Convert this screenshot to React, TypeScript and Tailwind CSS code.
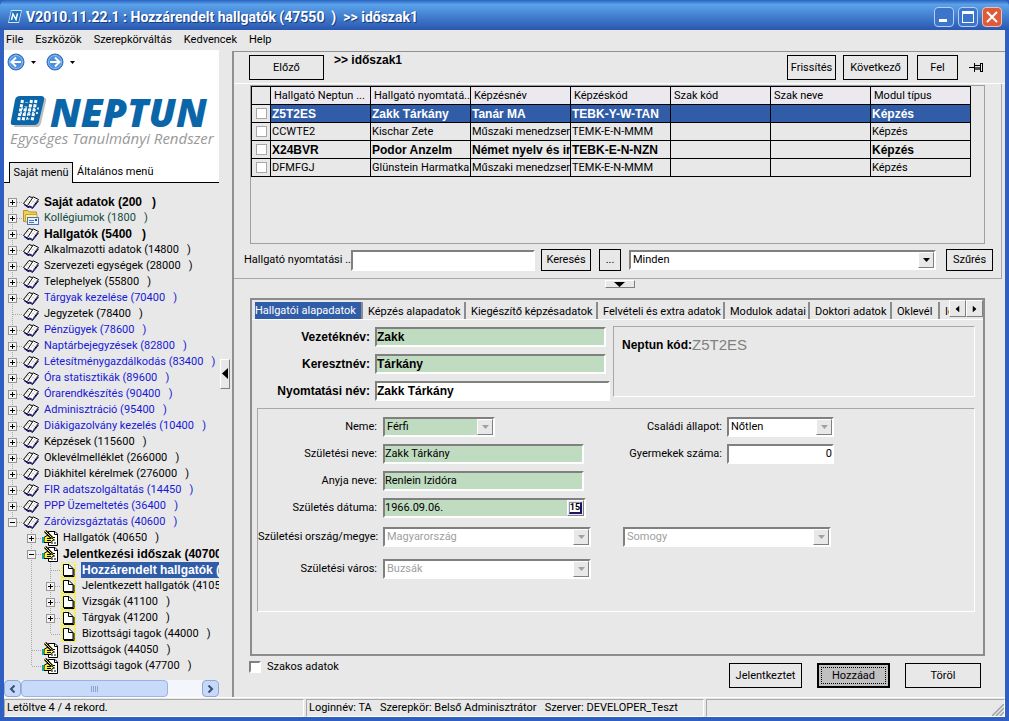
import { useState, ReactNode } from 'react';
import { clsx } from 'clsx';

type TreeIcon = 'book' | 'folder' | 'hand' | 'page';

interface TreeItem {
  label: string;
  level: number;
  icon: TreeIcon;
  box?: '+' | '-';
  bold?: boolean;
  color?: 'blue' | 'green';
  // one entry per level: v = line runs through, t = branch, l = last branch, f = first branch
  lines: string;
}

const TREE: TreeItem[] = [
  { label: 'Saját adatok (200   )', level: 0, icon: 'book', box: '+', bold: true, lines: 'f' },
  { label: 'Kollégiumok (1800   )', level: 0, icon: 'folder', box: '+', color: 'green', lines: 't' },
  { label: 'Hallgatók (5400   )', level: 0, icon: 'book', box: '+', bold: true, lines: 't' },
  { label: 'Alkalmazotti adatok (14800   )', level: 0, icon: 'book', box: '+', lines: 't' },
  { label: 'Szervezeti egységek (28000   )', level: 0, icon: 'book', box: '+', lines: 't' },
  { label: 'Telephelyek (55800   )', level: 0, icon: 'book', box: '+', lines: 't' },
  { label: 'Tárgyak kezelése (70400   )', level: 0, icon: 'book', box: '+', color: 'blue', lines: 't' },
  { label: 'Jegyzetek (78400   )', level: 0, icon: 'book', lines: 't' },
  { label: 'Pénzügyek (78600   )', level: 0, icon: 'book', box: '+', color: 'blue', lines: 't' },
  { label: 'Naptárbejegyzések (82800   )', level: 0, icon: 'book', box: '+', color: 'blue', lines: 't' },
  { label: 'Létesítménygazdálkodás (83400   )', level: 0, icon: 'book', box: '+', color: 'blue', lines: 't' },
  { label: 'Óra statisztikák (89600   )', level: 0, icon: 'book', box: '+', color: 'blue', lines: 't' },
  { label: 'Órarendkészítés (90400   )', level: 0, icon: 'book', box: '+', color: 'blue', lines: 't' },
  { label: 'Adminisztráció (95400   )', level: 0, icon: 'book', box: '+', color: 'blue', lines: 't' },
  { label: 'Diákigazolvány kezelés (10400   )', level: 0, icon: 'book', box: '+', color: 'blue', lines: 't' },
  { label: 'Képzések (115600   )', level: 0, icon: 'book', box: '+', lines: 't' },
  { label: 'Oklevélmelléklet (266000   )', level: 0, icon: 'book', box: '+', lines: 't' },
  { label: 'Diákhitel kérelmek (276000   )', level: 0, icon: 'book', box: '+', lines: 't' },
  { label: 'FIR adatszolgáltatás (14450   )', level: 0, icon: 'book', box: '+', color: 'blue', lines: 't' },
  { label: 'PPP Üzemeltetés (36400   )', level: 0, icon: 'book', box: '+', color: 'blue', lines: 't' },
  { label: 'Záróvizsgáztatás (40600   )', level: 0, icon: 'book', box: '-', color: 'blue', lines: 'l' },
  { label: 'Hallgatók (40650   )', level: 1, icon: 'hand', box: '+', lines: ' t' },
  { label: 'Jelentkezési időszak (40700   )', level: 1, icon: 'hand', box: '-', bold: true, lines: ' t' },
  { label: 'Hozzárendelt hallgatók (47550   )', level: 2, icon: 'page', bold: true, lines: ' vt' },
  { label: 'Jelentkezett hallgatók (41050   )', level: 2, icon: 'page', box: '+', lines: ' vt' },
  { label: 'Vizsgák (41100   )', level: 2, icon: 'page', box: '+', lines: ' vt' },
  { label: 'Tárgyak (41200   )', level: 2, icon: 'page', box: '+', lines: ' vt' },
  { label: 'Bizottsági tagok (44000   )', level: 2, icon: 'page', lines: ' vl' },
  { label: 'Bizottságok (44050   )', level: 1, icon: 'hand', lines: ' t' },
  { label: 'Bizottsági tagok (47700   )', level: 1, icon: 'hand', lines: ' l' },
];

const COLUMNS = ['Hallgató Neptun ...', 'Hallgató nyomtatá...', 'Képzésnév', 'Képzéskód', 'Szak kód', 'Szak neve', 'Modul típus'];

const ROWS = [
  { bold: true, cells: ['Z5T2ES', 'Zakk Tárkány', 'Tanár MA', 'TEBK-Y-W-TAN', '', '', 'Képzés'] },
  { bold: false, cells: ['CCWTE2', 'Kischar Zete', 'Műszaki menedzser', 'TEMK-E-N-MMM', '', '', 'Képzés'] },
  { bold: true, cells: ['X24BVR', 'Podor Anzelm', 'Német nyelv és ir', 'TEBK-E-N-NZN', '', '', 'Képzés'] },
  { bold: false, cells: ['DFMFGJ', 'Glünstein Harmatka', 'Műszaki menedzser', 'TEMK-E-N-MMM', '', '', 'Képzés'] },
];

const TABS = [
  { label: 'Hallgatói alapadatok', width: 'w-[108px]' },
  { label: 'Képzés alapadatok', width: 'w-[103px]' },
  { label: 'Kiegészítő képzésadatok', width: 'w-[132px]' },
  { label: 'Felvételi és extra adatok', width: 'w-[127px]' },
  { label: 'Modulok adatai', width: 'w-[85px]' },
  { label: 'Doktori adatok', width: 'w-[82px]' },
  { label: 'Oklevél', width: 'w-[48px]' },
  { label: 'Id', width: 'w-[60px]' },
];

const INSET = 'border-2 border-t-[#808080] border-l-[#808080] border-r-white border-b-white';
const RAISED = 'border border-t-white border-l-white border-r-[#808080] border-b-[#808080] bg-[#e8e8e8]';
const GROUP = 'border border-t-[#a8a8a8] border-r-white border-b-white border-l-[#a8a8a8]';
const BOLD = "font-['Liberation_Sans',sans-serif] text-[12px] font-bold";

function BookIcon() {
  return (
    <svg width="16" height="16" viewBox="0 0 16 16" className="shrink-0">
      <path d="M0.500 9.500 L6 2.500 L9 3.500 L10.500 3 L15.500 5.500 L9.500 13.500 L7 12 L5 12.500 Z" fill="#fff" stroke="#000" />
      <path d="M1 10.500 L5 13.500 L7 13 L9.500 14.500 L15.500 7" fill="none" stroke="#000080" />
      <path d="M9.500 4 L4.500 11.500" stroke="#000" fill="none" />
      <path d="M6 5 L3.500 8.500 M8 5.500 L5 9.500 M11.500 5.500 L8 10 M13.500 6.500 L10 11" stroke="#999" strokeDasharray="1 1" />
    </svg>
  );
}

function FolderIcon() {
  return (
    <svg width="16" height="16" viewBox="0 0 16 16" className="shrink-0">
      <path d="M0.500 0.500 H5 L6.500 2 H13.500 V11.500 H0.500 Z" fill="#f5cf55" stroke="#b8902c" />
      <path d="M2.500 4.500 H14 V12 H2.500 Z" fill="#fdeea0" stroke="#c9a13a" />
      <rect x="4.500" y="7.500" width="11" height="7" fill="#e6f0fc" stroke="#4a74b4" />
      <path d="M6 10.500 H11 M6 12.500 H11" stroke="#4a74b4" />
      <rect x="12" y="9" width="2" height="2" fill="#2d5ca8" />
    </svg>
  );
}

function HandIcon() {
  return (
    <svg width="16" height="16" viewBox="0 0 16 16" className="shrink-0">
      <path d="M6.500 1.500 H13 L15.500 4 V15.500 H6.500 Z" fill="#fff" stroke="#000" />
      <path d="M12.500 1.500 V4.500 H15.500" fill="none" stroke="#000" />
      <path d="M11 7.500 H14 M11 10 H14 M9 13 H14" stroke="#000" strokeDasharray="2 1" />
      <path d="M2 7.500 L5 5.500 L9 6.500 L11.500 9.500 L9 12.500 L2 12.500 Z" fill="#f7f03a" stroke="#000" />
      <path d="M5 8.500 H9 M5 10.500 H9" stroke="#000" />
      <rect x="0" y="7" width="2" height="6" fill="#12a5a5" />
      <path d="M3 1 L10 8" stroke="#000" strokeWidth="3" />
      <path d="M3 1 L9.500 7.500" stroke="#f7e83a" strokeWidth="1" />
    </svg>
  );
}

function PageIcon() {
  return (
    <svg width="16" height="16" viewBox="0 0 16 16" className="shrink-0">
      <rect x="1" y="0" width="13" height="16" fill="none" stroke="#f4f03c" strokeWidth="2" strokeDasharray="2 1" />
      <path d="M2.500 2.500 H8 L12 6.500 V13.500 H2.500 Z" fill="#fff" stroke="#000" />
      <path d="M7.500 2.500 V6.500 H12" fill="none" stroke="#000" />
      <path d="M13 7 V14.500 H3" fill="none" stroke="#000" />
    </svg>
  );
}

const ICONS: Record<TreeIcon, ReactNode> = {
  book: <BookIcon />,
  folder: <FolderIcon />,
  hand: <HandIcon />,
  page: <PageIcon />,
};

// A 19px wide cell of the tree's dotted guide lines, with the expander drawn on top
function Guide({ kind, box }: { kind: string; box?: '+' | '-' }) {
  return (
    <svg width="19" height="16" viewBox="0 0 19 16" className="shrink-0">
      <g stroke="#a8a8a8" strokeDasharray="1 1" fill="none">
        {(kind === 'v' || kind === 't') && <path d="M8.500 0 V16" />}
        {kind === 'l' && <path d="M8.500 0 V8" />}
        {kind === 'f' && <path d="M8.500 8 V16" />}
        {'tlf'.includes(kind) && <path d="M9 8.500 H19" />}
      </g>
      {box && (
        <>
          <rect x="4.500" y="4.500" width="8" height="8" fill="#f4f4f4" stroke="#969696" />
          <path d={box === '+' ? 'M6 8.500 H11 M8.500 6 V11' : 'M6 8.500 H11'} stroke="#000" />
        </>
      )}
    </svg>
  );
}

function NavArrow({ back }: { back?: boolean }) {
  return (
    <svg width="18" height="18" viewBox="0 0 18 18" className={clsx(!back && 'rotate-180')}>
      <circle cx="9" cy="9" r="8" fill="#4d90dc" stroke="#2f6dbd" />
      <circle cx="9" cy="9" r="6.500" fill="none" stroke="#8dbcf0" />
      <path d="M14 9 H5 M9 4.500 L4.500 9 L9 13.500" fill="none" stroke="#fff" strokeWidth="2" />
    </svg>
  );
}

function Caret({ className }: { className?: string }) {
  return (
    <svg width="7" height="4" viewBox="0 0 7 4" className={className}>
      <path d="M0 0 H7 L3.500 4 Z" fill="currentColor" />
    </svg>
  );
}

function SmallCaret() {
  return (
    <svg width="5" height="3" viewBox="0 0 5 3" className="mx-1.5">
      <path d="M0 0 H5 L2.500 3 Z" fill="currentColor" />
    </svg>
  );
}

function AppIcon() {
  return (
    <svg width="14" height="14" viewBox="0 0 14 14">
      <path d="M3 0 H14 L11 13 H0 Z" fill="#cfe6fb" />
      <path d="M3.500 1 H13 L10.500 12 H1 Z" fill="#1d73bd" />
      <path d="M3.500 10 L5 4 L8 9.500 L9.500 3.500" fill="none" stroke="#fff" strokeWidth="1.500" />
    </svg>
  );
}

function LogoMark() {
  return (
    <svg width="38" height="34" viewBox="0 0 38 34" className="shrink-0">
      <path d="M12 3 H34 Q37 3 36 6 L31 28 Q30 32 27 32 H4 Z" fill="#bdbdbd" />
      <path d="M10 1 H31 Q35 1 34 5 L29 26 Q28 30 24 30 H3 Q0 30 1 26 L5 5 Q6 1 10 1 Z" fill="#0a66a8" />
      <path d="M12.500 5 L8.500 26 M17 5 L13 26 M21.500 5 L17.500 26 M26 5 L22 26" stroke="#fff" strokeWidth="3" strokeDasharray="3 1.400" />
      <path d="M11 13.600 H29 M10 18 H28" stroke="#cfe3f3" strokeWidth="2" strokeDasharray="2 2" />
      <path d="M15 6 H19 M14 10 H18 M18 22 H21 M17 26 H20" stroke="#0a66a8" strokeWidth="3" />
    </svg>
  );
}

function PushButton({ children, className }: { children: ReactNode; className?: string }) {
  return (
    <button className={clsx('flex shrink-0 items-center justify-center border border-black bg-[#e8e8e8]', className)}>
      {children}
    </button>
  );
}

interface DropDownProps {
  id: string;
  label?: string;
  value: string;
  className?: string;
  tone?: 'green' | 'grey' | 'plain';
  active?: boolean;
}

function DropDown({ id, label, value, className, tone = 'plain', active }: DropDownProps) {
  return (
    <div className={clsx('relative h-5', className)}>
      <select
        id={id}
        aria-label={label}
        defaultValue={value}
        className={clsx(
          'h-full w-full appearance-none rounded-none pl-0.5 leading-4 outline-none',
          INSET,
          tone === 'green' ? 'bg-[#c0dcc0]' : 'bg-white',
          tone === 'grey' && 'text-[#a0a0a0]'
        )}
      >
        <option>{value}</option>
      </select>
      <span className={clsx('pointer-events-none absolute top-0.5 right-0.5 bottom-0.5 flex w-4 items-center justify-center', RAISED)}>
        <Caret className={active ? 'text-black' : 'text-[#a0a0a0]'} />
      </span>
    </div>
  );
}

function TextField({ id, value, className }: { id: string; value: string; className?: string }) {
  return <input id={id} type="text" defaultValue={value} className={clsx('h-5 rounded-none outline-none', INSET, className)} />;
}

function TitleBar() {
  return (
    <header className="flex h-[30px] items-center justify-between rounded-t-md bg-linear-to-b from-[#2a62c0] via-[#5aa2ea] via-15% to-[#2b57b0] pr-[7px] pl-2 text-white">
      <div className="flex items-center gap-1 pt-1">
        <AppIcon />
        <h1 className="text-[14px] leading-4 font-bold whitespace-pre [text-shadow:1px_1px_0_#153a80]">
          {'V2010.11.22.1 : Hozzárendelt hallgatók (47550  )  >> időszak1'}
        </h1>
      </div>
      <div className="flex gap-1 pt-1">
        <button aria-label="Kis méret" className="flex size-5 items-end rounded-sm border border-[#b4cdf0] bg-[#3c76cc] p-1">
          <span className="h-[3px] w-2 bg-white" />
        </button>
        <button aria-label="Teljes méret" className="flex size-5 items-center justify-center rounded-sm border border-[#b4cdf0] bg-[#3c76cc]">
          <span className="h-3 w-3 border border-t-[3px] border-white" />
        </button>
        <button aria-label="Bezárás" className="flex size-5 items-center justify-center rounded-sm border border-[#f0c0b0] bg-[#dd5a3a]">
          <svg width="12" height="12" viewBox="0 0 12 12">
            <path d="M1 1 L11 11 M11 1 L1 11" stroke="#fff" strokeWidth="2" />
          </svg>
        </button>
      </div>
    </header>
  );
}

function Sidebar() {
  const [selected, setSelected] = useState(23);

  return (
    <aside className="flex w-[215px] shrink-0 flex-col">
      <div className="bg-white">
        <div className="flex h-6 items-center pl-[3px]">
          <button aria-label="Vissza"><NavArrow back /></button>
          <SmallCaret />
          <button aria-label="Előre" className="ml-1"><NavArrow /></button>
          <SmallCaret />
        </div>
        <div className="px-1.5 pt-5 pb-4">
          <div className="flex h-9 items-center gap-0.5">
            <LogoMark />
            <span className="font-['Open_Sans',sans-serif] text-[39px] leading-9 font-extrabold text-[#0a66a8] italic">NEPTUN</span>
          </div>
          <p className="font-['Open_Sans',sans-serif] text-[15px] leading-4 whitespace-nowrap text-[#999] italic">
            Egységes Tanulmányi Rendszer
          </p>
        </div>
        <div className="flex h-[21px] items-stretch">
          <span className="w-[5px] border-b border-black" />
          <button className="w-16 border border-b-0 border-black bg-[#e8e8e8] whitespace-nowrap">Saját menü</button>
          <button className="flex-1 border-b border-black pl-1 text-left">Általános menü</button>
        </div>
      </div>

      <ul className="flex-1 overflow-hidden pt-[11px] pb-1.5">
        {TREE.map((item, i) => (
          <li key={item.label} className="flex h-4 items-center">
            {item.lines.split('').map((kind, n) => (
              <Guide key={n} kind={kind} box={n === item.level ? item.box : undefined} />
            ))}
            {ICONS[item.icon]}
            <button
              onClick={() => setSelected(i)}
              className={clsx(
                'ml-1 h-4 pl-px text-left leading-4 whitespace-pre',
                item.bold && BOLD,
                selected === i ? 'bg-[#315da8] text-white' : item.color === 'blue' ? 'text-[#1818d8]' : item.color === 'green' && 'text-[#104a40]'
              )}
            >
              {item.label}
            </button>
          </li>
        ))}
      </ul>

      <div className="flex h-[17px] bg-[#f4f6fc]">
        <button aria-label="Balra" className="flex w-[17px] items-center justify-center rounded-sm border border-[#8ea8d8] bg-[#c8d8f8]">
          <svg width="7" height="8" viewBox="0 0 7 8"><path d="M5.500 0.500 L2 4 L5.500 7.500" fill="none" stroke="#34507c" strokeWidth="2" /></svg>
        </button>
        <div className="flex w-[147px] items-center justify-center gap-px rounded-sm border border-[#98b4e4] bg-[#c8dafa]">
          {[0, 1, 2, 3].map(n => (
            <span key={n} className="h-1.5 w-px border-r border-[#8aa4d4]" />
          ))}
        </div>
        <button aria-label="Jobbra" className="ml-auto flex w-[17px] items-center justify-center rounded-sm border border-[#8ea8d8] bg-[#c8d8f8]">
          <svg width="7" height="8" viewBox="0 0 7 8"><path d="M1.500 0.500 L5 4 L1.500 7.500" fill="none" stroke="#34507c" strokeWidth="2" /></svg>
        </button>
      </div>
    </aside>
  );
}

function Toolbar() {
  return (
    <div className="flex h-8 shrink-0 items-center border-b border-white pr-[21px] pl-[15px]">
      <PushButton className="h-[25px] w-[75px]">Előző</PushButton>
      <h2 className={clsx('self-start pl-2.5 leading-4', BOLD)}>&gt;&gt; időszak1</h2>
      <div className="ml-auto flex items-center">
        <PushButton className="h-[25px] w-[49px]">Frissítés</PushButton>
        <PushButton className="ml-[7px] h-[25px] w-[65px]">Következő</PushButton>
        <PushButton className="ml-[9px] h-[25px] w-[41px]">Fel</PushButton>
        <button aria-label="Rögzítés" className="ml-[11px]">
          <svg width="15" height="11" viewBox="0 0 15 11">
            <path d="M0 5.500 H5 M5.500 1 V10 M6 3.500 H11 M6 7.500 H11 M11.500 1 V10 M13.500 1 V10" stroke="#000" strokeWidth="1" />
            <rect x="6" y="5" width="5" height="3" fill="#555" />
            <path d="M11 1.500 H14 M11 9.500 H14" stroke="#000" />
          </svg>
        </button>
      </div>
    </div>
  );
}

function StudentGrid() {
  const [selected, setSelected] = useState(0);

  return (
    <div className="mt-px mr-4 ml-4 h-[159px] border border-[#a0a0a0]">
      <table className="w-[720px] table-fixed border-collapse">
        <thead>
          <tr className="h-[18px]">
            <th className="w-[19px] border border-black" />
            {COLUMNS.map(col => (
              <th key={col} className="overflow-hidden border border-black bg-[#ebe9ee] p-0 pl-[3px] text-left leading-4 font-normal whitespace-nowrap">
                {col}
              </th>
            ))}
          </tr>
        </thead>
        <tbody>
          {ROWS.map((row, i) => (
            <tr
              key={i}
              onClick={() => setSelected(i)}
              className={clsx('h-[18px]', row.bold && BOLD, selected === i && 'bg-[#315da8] text-white')}
            >
              <td className="border border-black bg-[#e8e8e8] p-0">
                <input
                  type="checkbox"
                  aria-label={`${row.cells[1]} kijelölése`}
                  className="mx-auto block size-[11px] appearance-none border border-[#a8a8a8] bg-white"
                />
              </td>
              {row.cells.map((cell, n) => (
                <td key={n} className="overflow-hidden border border-black p-0 pl-px leading-4 whitespace-nowrap">{cell}</td>
              ))}
            </tr>
          ))}
        </tbody>
      </table>
    </div>
  );
}

function FilterBar() {
  return (
    <div className="flex items-center pt-[5px] pr-2 pb-[7px] pl-2.5">
      <label htmlFor="search" className="w-[107px] shrink-0 whitespace-nowrap">Hallgató nyomtatási ...</label>
      <input id="search" type="text" className={clsx('h-[21px] w-[184px] bg-white outline-none', INSET)} />
      <PushButton className="ml-1.5 h-[22px] w-[50px]">Keresés</PushButton>
      <PushButton className="mr-2 ml-2 h-[22px] w-[22px]">...</PushButton>
      <DropDown id="filter" label="Szűrő" value="Minden" className="flex-1" active />
      <PushButton className="ml-2.5 h-[22px] w-[47px]">Szűrés</PushButton>
    </div>
  );
}

function NameRow({ id, label, value, green }: { id: string; label: string; value: string; green?: boolean }) {
  return (
    <div className={clsx('flex h-[27px] items-center gap-[5px]', BOLD)}>
      <label htmlFor={id} className="w-[113px] text-right">{label}</label>
      <TextField id={id} value={value} className={green ? 'w-[231px] bg-[#c0dcc0]' : 'w-[235px] bg-white'} />
    </div>
  );
}

function DetailForm() {
  return (
    <div className="pr-2 pb-[42px] pl-[5px]">
      <div className="flex pt-[3px]">
        <div className="w-[356px] shrink-0">
          <NameRow id="lastname" label="Vezetéknév:" value="Zakk" green />
          <NameRow id="firstname" label="Keresztnév:" value="Tárkány" green />
          <NameRow id="printname" label="Nyomtatási név:" value="Zakk Tárkány" />
        </div>
        <div className={clsx('mt-[3px] h-[71px] flex-1 px-2 pt-2', GROUP)}>
          <div className="flex items-center">
            <label htmlFor="code" className={BOLD}>Neptun kód:</label>
            <input id="code" readOnly defaultValue="Z5T2ES" className="w-24 bg-transparent font-['Liberation_Sans',sans-serif] text-[15px] leading-5 text-[#808080] outline-none" />
          </div>
        </div>
      </div>

      <div className={clsx('mt-1 grid grid-cols-[119px_240px_1fr] items-center pt-1 pb-[26px] whitespace-nowrap', GROUP)}>
        <label htmlFor="gender" className="text-right">Neme:</label>
        <div className="flex h-[27px] items-center pl-1.5">
          <DropDown id="gender" value="Férfi" className="w-[112px]" tone="green" />
        </div>
        <div className="flex items-center gap-[5px]">
          <label htmlFor="marital" className="w-[105px] text-right">Családi állapot:</label>
          <DropDown id="marital" value="Nőtlen" className="w-[107px]" />
        </div>

        <label htmlFor="birthname" className="text-right">Születési neve:</label>
        <div className="flex h-[27px] items-center pl-1.5">
          <TextField id="birthname" value="Zakk Tárkány" className="w-[201px] bg-[#c0dcc0]" />
        </div>
        <div className="flex items-center gap-[5px]">
          <label htmlFor="children" className="w-[105px] text-right">Gyermekek száma:</label>
          <TextField id="children" value="0" className="w-[107px] bg-white text-right" />
        </div>

        <label htmlFor="mother" className="text-right">Anyja neve:</label>
        <div className="col-span-2 flex h-[27px] items-center pl-1.5">
          <TextField id="mother" value="Renlein Izidóra" className="w-[201px] bg-[#c0dcc0]" />
        </div>

        <label htmlFor="birthdate" className="text-right">Születés dátuma:</label>
        <div className="col-span-2 flex h-[27px] items-center pl-1.5">
          <div className={clsx('flex h-5 w-[203px] bg-[#c0dcc0]', INSET)}>
            <input id="birthdate" type="text" defaultValue="1966.09.06." className="min-w-0 flex-1 outline-none" />
            <button aria-label="Naptár" className={clsx('flex w-[17px] items-center justify-center', RAISED)}>
              <span className="border border-t-[#9090b0] border-r-2 border-b-2 border-l-[#9090b0] border-[#181860] bg-white text-[9px] leading-[9px] font-bold">15</span>
            </button>
          </div>
        </div>

        <label htmlFor="country" className="text-right">Születési ország/megye:</label>
        <div className="flex h-8 items-center pl-1.5">
          <DropDown id="country" value="Magyarország" className="w-[208px]" tone="grey" />
        </div>
        <div className="pl-1.5">
          <DropDown id="county" label="Megye" value="Somogy" className="w-[208px]" tone="grey" />
        </div>

        <label htmlFor="city" className="text-right">Születési város:</label>
        <div className="col-span-2 flex h-8 items-center pl-1.5">
          <DropDown id="city" value="Buzsák" className="w-[208px]" tone="grey" />
        </div>
      </div>
    </div>
  );
}

function DetailTabs() {
  const [active, setActive] = useState(0);

  return (
    <section className="mr-5 ml-4 border-2 border-[#8c8c8c]">
      <div className="flex h-5 items-start border-b border-white pl-[3px]">
        <div role="tablist" className="flex h-full min-w-0 flex-1 items-end overflow-hidden pt-0.5">
          {TABS.map((tab, i) => (
            <button
              key={tab.label}
              role="tab"
              aria-selected={active === i}
              onClick={() => setActive(i)}
              className={clsx(
                'h-full shrink-0 overflow-hidden border-r-2 border-[#8c8c8c] text-left leading-4 whitespace-nowrap',
                tab.width,
                active === i ? 'bg-[#315da8] text-white' : 'pt-0.5 pl-[5px]'
              )}
            >
              {tab.label}
            </button>
          ))}
        </div>
        <button aria-label="Előző fül" className={clsx('flex h-[17px] w-[17px] items-center justify-center', RAISED)}>
          <Caret className="rotate-90" />
        </button>
        <button aria-label="Következő fül" className={clsx('flex h-[17px] w-[17px] items-center justify-center', RAISED)}>
          <Caret className="-rotate-90" />
        </button>
      </div>
      <DetailForm />
    </section>
  );
}

function ActionBar() {
  return (
    <div className="flex items-start pr-6 pl-[15px]">
      <label className="flex items-center gap-1.5 pt-[3px]">
        <input type="checkbox" className={clsx('size-3 appearance-none bg-white', INSET)} />
        Szakos adatok
      </label>
      <div className="ml-auto flex items-end gap-[15px] pt-[7px]">
        <PushButton className="h-[25px] w-[73px]">Jelentkeztet</PushButton>
        <button className="h-[25px] w-[73px] border-2 border-black bg-[#c0c0c0] p-0.5">
          <span className="flex h-full items-center justify-center border border-dotted border-black">Hozzáad</span>
        </button>
        <PushButton className="h-[25px] w-[76px]">Töröl</PushButton>
      </div>
    </div>
  );
}

function StatusBar() {
  const cell = 'flex h-[18px] items-center border border-t-[#a8a8a8] border-l-[#a8a8a8] border-r-white border-b-white whitespace-pre';
  return (
    <footer className="flex gap-0.5 border-t border-white pt-px">
      <div className={clsx(cell, 'w-[300px] pl-0.5')}>Letöltve 4 / 4 rekord.</div>
      <div className={clsx(cell, 'w-[398px] pl-0.5')}>{'Loginnév: TA   Szerepkör: Belső Adminisztrátor   Szerver: DEVELOPER_Teszt'}</div>
      <div className={clsx(cell, 'flex-1 items-end justify-end')}>
        <svg width="12" height="12" viewBox="0 0 12 12">
          <path d="M0 12 L12 0 M4 12 L12 4 M8 12 L12 8" stroke="#a0a0a0" strokeWidth="1.500" />
        </svg>
      </div>
    </footer>
  );
}

export default function App() {
  return (
    <div className="flex min-h-screen flex-col bg-[#2f5fc0] font-[Roboto,sans-serif] text-[11px] leading-4 text-black">
      <TitleBar />
      <div className="mx-1 mb-1 flex flex-1 flex-col bg-[#e8e8e8]">
        <nav className="flex h-5 items-center gap-3 pl-0.5">
          {['File', 'Eszközök', 'Szerepkörváltás', 'Kedvencek', 'Help'].map(item => (
            <button key={item}>{item}</button>
          ))}
        </nav>

        <div className="flex flex-1">
          <Sidebar />
          <div className="flex w-[13px] items-center pl-px">
            <button aria-label="Menü elrejtése" className={clsx('flex h-[30px] w-2.5 items-center justify-center', RAISED)}>
              <svg width="6" height="11" viewBox="0 0 6 11"><path d="M6 0 V11 L0 5.500 Z" fill="#000" /></svg>
            </button>
          </div>
          <main className="mt-px flex min-w-0 flex-1 flex-col border-t border-l-2 border-[#909090]">
            <Toolbar />
            <div className="mr-[3px] border-r border-b border-[#a8a8a8]">
              <StudentGrid />
              <FilterBar />
            </div>
            <div className="flex h-[19px] justify-center">
              <button aria-label="Lista elrejtése" className={clsx('mt-px flex h-2 w-[30px] items-center justify-center', RAISED)}>
                <svg width="11" height="5" viewBox="0 0 11 5"><path d="M0 0 H11 L5.500 5 Z" fill="#000" /></svg>
              </button>
            </div>
            <DetailTabs />
            <ActionBar />
          </main>
        </div>
        <StatusBar />
      </div>
    </div>
  );
}
